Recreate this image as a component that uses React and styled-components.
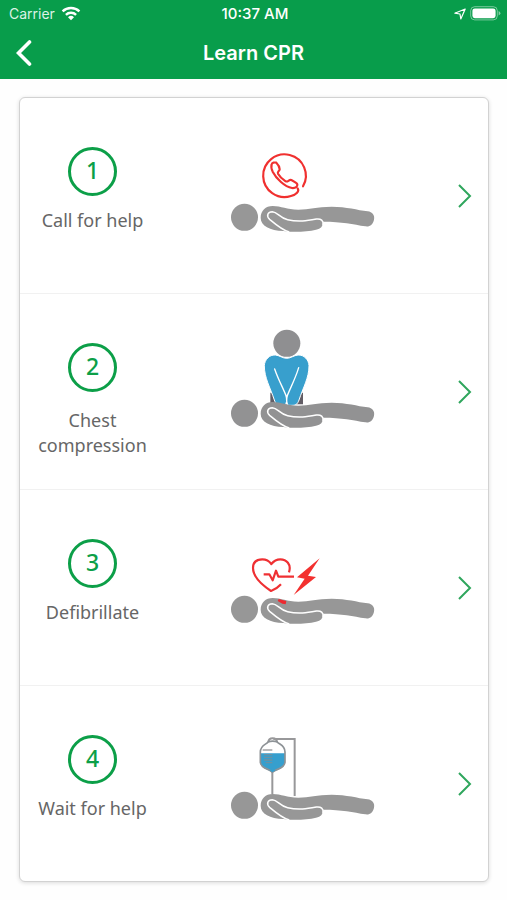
import styled, { createGlobalStyle } from "styled-components";

const App = () => {
  return (
    <>
      <GlobalStyle />
      <Header>
        <StatusBar>
          <Carrier>
            Carrier
            <WifiIcon />
          </Carrier>
          <Clock>10:37 AM</Clock>
          <Indicators>
            <LocationIcon />
            <BatteryIcon />
          </Indicators>
        </StatusBar>
        <NavBar>
          <BackButton type="button" aria-label="Back">
            <svg width="16" height="26" viewBox="0 0 16 26" fill="none">
              <path
                d="M13.5 2 L2.5 13 L13.5 24"
                stroke="#fff"
                strokeWidth="3.6"
                strokeLinecap="round"
              />
            </svg>
          </BackButton>
          <Title>Learn CPR</Title>
        </NavBar>
      </Header>
      <Main>
        <StepList>
          {steps.map(({ id, label, twoLines, Drawing }, index) => (
            <StepItem key={id}>
              <StepLink href={`#${id}`}>
                <StepInfo>
                  <StepNumber>{index + 1}</StepNumber>
                  <StepLabel $twoLines={twoLines}>{label}</StepLabel>
                </StepInfo>
                <Illustration viewBox="0 0 510 360" aria-hidden="true">
                  <Drawing />
                </Illustration>
                <Chevron viewBox="0 0 14 24" aria-hidden="true">
                  <path d="M1 1 L12 12 L1 23" />
                </Chevron>
              </StepLink>
            </StepItem>
          ))}
        </StepList>
      </Main>
    </>
  );
};

const WifiIcon = () => (
  <svg width="20" height="15" viewBox="0 0 20 15" fill="none" aria-hidden="true">
    <g stroke="#fff" strokeWidth="2.4">
      <path d="M1.6 5.4 A12 12 0 0 1 18.4 5.4" />
      <path d="M4.9 8.9 A7.2 7.2 0 0 1 15.1 8.9" />
    </g>
    <path d="M7 11.2 A4.3 4.3 0 0 1 13 11.2 L10 14.2 Z" fill="#fff" />
  </svg>
);

const LocationIcon = () => (
  <svg width="12" height="12" viewBox="0 0 12 12" fill="none" aria-hidden="true">
    <path
      d="M0.8 5.2 L11.2 1 L6.8 11 L6 6 Z"
      stroke="#fff"
      strokeWidth="1.2"
      strokeLinejoin="round"
    />
  </svg>
);

const BatteryIcon = () => (
  <svg width="31" height="15" viewBox="0 0 31 15" aria-hidden="true">
    <rect
      x="0.7"
      y="0.7"
      width="26.6"
      height="13.2"
      rx="4"
      fill="none"
      stroke="#fff"
      strokeOpacity="0.45"
    />
    <rect x="2.4" y="2.4" width="23.2" height="9.8" rx="2.4" fill="#fff" />
    <path d="M28.6 5 Q30.4 6 30.4 7.3 Q30.4 8.6 28.6 9.6 Z" fill="#fff" fillOpacity="0.5" />
  </svg>
);

const Patient = ({ color = "#979797" }) => (
  <>
    <circle cx="73.5" cy="280" r="40.5" fill={color} />
    <path
      d="M158 246 C184 246 200 257 235 257 C268 257 290 248 335 248 C380 248 412 258 443 262
        C457 264 465 274 462 287 C459 301 450 309 436 307 C400 301 365 293 310 293
        C308 307 303 314 288 317 C262 323 222 326 190 321 C150 319 122 306 122 281
        C122 260 137 246 158 246 Z"
      fill={color}
    />
    <path
      d="M206 323 C186 318 168 302 149 286 C138 276 143 263 157 263 C173 264 178 281 203 287
        C235 295 262 290 289 285 C303 283 311 290 309 302"
      fill="none"
      stroke="#fff"
      strokeWidth="4.5"
      strokeLinecap="round"
    />
  </>
);

const CallDrawing = () => (
  <>
    <g fill="none" stroke="#f0302f" strokeWidth="6.5" strokeLinecap="round" strokeLinejoin="round">
      <path d="M249 187 A64 64 0 1 0 213 216 C229 211 239 202 233 193" />
      <path
        d="M155 121 C156 115 164 115 169 116 C174 121 179 131 179 136 C179 141 171 143 174 149
          C179 158 188 166 197 172 C204 175 206 166 214 168 C222 172 230 176 232 181
          C233 188 227 193 216 192 C194 188 169 164 158 143 C154 134 153 127 155 121 Z"
      />
    </g>
    <Patient />
  </>
);

const CompressionDrawing = () => (
  <>
    <circle cx="200.5" cy="70" r="40.5" fill="#8f8f91" />
    <path d="M151 218 L249 218 L249 253 L151 253 Z" fill="#625d65" />
    <path
      d="M166 105 C178 106 188 115 200 115 C212 115 222 106 234 105 C252 104 266 119 267 137
        C267 174 249 203 237 240 C233 251 229 256 216 256 L184 256 C171 256 167 251 163 240
        C151 203 133 174 133 137 C134 119 148 104 166 105 Z"
      fill="#389fcd"
      stroke="#fff"
      strokeWidth="3"
    />
    <path
      d="M164 147 C175 180 191 207 200 232 C209 207 225 180 236 143 M198 227 C201 236 201 246 196 257
        M202 227 C199 236 199 246 204 257"
      fill="none"
      stroke="#fff"
      strokeWidth="4"
      strokeLinecap="round"
    />
    <Patient color="#929293" />
  </>
);

const DefibrillateDrawing = () => (
  <>
    <g fill="none" stroke="#ef3033" strokeWidth="6.5" strokeLinejoin="round">
      <path
        d="M183 205 C175 214 164 221 153 225 C132 211 99 184 99 156 C99 135 114 130 127 130
          C140 130 149 137 154 144 C162 134 170 130 181 130 C199 130 215 144 207 169"
      />
      <path d="M131 175 L148 175 L158 193 L168 164 L175 182 L222 182" />
    </g>
    <path d="M299 127 L231 184 L254 188 L221 237 L288 183 L264 179 Z" fill="#f3312f" />
    <Patient />
    <path d="M173 255 L176 249 L199 255 L197 265 L187 263 Z" fill="#ed2930" />
  </>
);

const DripDrawing = () => (
  <>
    <g fill="none" stroke="#98989a" strokeWidth="6">
      <path d="M157 174 L157 246 M160 81 L224 81 L224 252" />
      <path d="M145 91 C146 75 170 75 171 91" />
    </g>
    <path d="M121 124 L195 124 L195 152 C195 164 179 172 167 176 L157 181 L148 176 C137 171 121 164 121 152 Z" fill="#369fce" />
    <path
      d="M145 89 Q158 86 171 89 C178 98 195 99 195 120 L195 150 C195 165 178 170 168 174
        L157 181 L148 174 C138 170 121 165 121 150 L121 120 C121 99 139 98 145 89 Z"
      fill="none"
      stroke="#8d9296"
      strokeWidth="5"
    />
    <path d="M148 174 L168 174 L157 181 Z" fill="#369fce" />
    <path d="M128 114 H157" stroke="#98989a" strokeWidth="4" />
    <path d="M132 128 H157 M132 136 H157 M132 144 H157 M137 152 H157" stroke="#6d91a3" strokeWidth="4" />
    <Patient />
  </>
);

const steps = [
  { id: "call", label: "Call for help", Drawing: CallDrawing },
  { id: "compression", label: "Chest compression", twoLines: true, Drawing: CompressionDrawing },
  { id: "defibrillate", label: "Defibrillate", Drawing: DefibrillateDrawing },
  { id: "wait", label: "Wait for help", Drawing: DripDrawing },
];

const GlobalStyle = createGlobalStyle`
  * {
    box-sizing: border-box;
  }

  body {
    margin: 0;
    background: #fefefe;
    font-family: "Noto Sans", "Open Sans", sans-serif;
  }
`;

const Header = styled.header`
  background: #089d4b;
  color: #fff;
  font-family: Inter, "Liberation Sans", sans-serif;
`;

const StatusBar = styled.div`
  display: grid;
  grid-template-columns: 1fr auto 1fr;
  align-items: center;
  height: 27px;
  padding: 0 6px 0 9px;
  font-size: 14px;
`;

const Carrier = styled.span`
  display: flex;
  align-items: center;
  gap: 6px;
  color: #dcf2e5;
`;

const Clock = styled.span`
  font-size: 15px;
  font-weight: 500;
`;

const Indicators = styled.span`
  display: flex;
  align-items: center;
  justify-content: flex-end;
  gap: 4px;
`;

const NavBar = styled.div`
  display: grid;
  grid-template-columns: 48px 1fr 48px;
  align-items: center;
  height: 52px;
`;

const BackButton = styled.button`
  display: flex;
  padding: 0 0 0 16px;
  border: 0;
  background: none;
  cursor: pointer;
`;

const Title = styled.h1`
  margin: 0;
  font-size: 20px;
  font-weight: 600;
  text-align: center;
`;

const Main = styled.main`
  padding: 18px 18px 18px 19px;
`;

const StepList = styled.ol`
  margin: 0;
  padding: 0;
  list-style: none;
  background: #fff;
  border: 1px solid #d2d2d2;
  border-radius: 6px;
  box-shadow: 0 1px 4px rgba(0, 0, 0, 0.14);
`;

const StepItem = styled.li`
  & + & {
    border-top: 1px solid #f1f1f1;
  }
`;

const StepLink = styled.a`
  display: grid;
  grid-template-columns: 145px 1fr 44px;
  align-items: start;
  min-height: 195px;
  color: #666;
  text-decoration: none;
`;

const StepInfo = styled.div`
  display: flex;
  flex-direction: column;
  align-items: center;
  padding-top: 49px;
`;

const StepNumber = styled.span`
  display: flex;
  justify-content: center;
  width: 49px;
  height: 49px;
  border: 3px solid #0c9f48;
  border-radius: 50%;
  color: #0c9f48;
  font-size: 23px;
  font-weight: 500;
  line-height: 40px;
`;

const StepLabel = styled.span`
  margin-top: ${({ $twoLines }) => ($twoLines ? 16 : 12)}px;
  font-size: 18px;
  line-height: 25px;
  text-align: center;
`;

const Illustration = styled.svg`
  justify-self: center;
  width: 170px;
  height: 120px;
  margin-top: 26px;
`;

const Chevron = styled.svg`
  align-self: center;
  width: 14px;
  height: 24px;
  margin-left: 14px;
  fill: none;
  stroke: #2fa65d;
  stroke-width: 2;
`;

export default App;
